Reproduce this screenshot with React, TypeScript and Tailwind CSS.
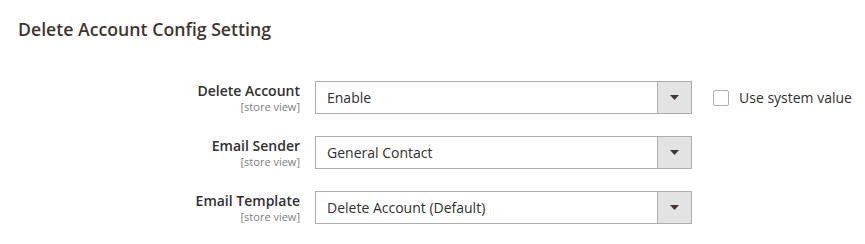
import React from 'react';

const rows = [
  { label: 'Delete Account', value: 'Enable', system: true },
  { label: 'Email Sender', value: 'General Contact', system: false },
  { label: 'Email Template', value: 'Delete Account (Default)', system: false },
];

const font = { fontFamily: '"Open Sans", "Noto Sans", sans-serif' };

export default function App() {
  return (
    <div className="w-[865px] h-[244px] bg-white text-[#303030]" style={font}>
      <h2 className="pl-[18px] pt-[17px] text-[17.7px] leading-[24px] font-semibold text-[#41362f]">
        Delete Account Config Setting
      </h2>
      <div className="mt-[40px] flex flex-col gap-[22px]">
        {rows.map((r) => (
          <div key={r.label} className="flex items-start">
            <div className="w-[300px] shrink-0 text-right">
              <div className="text-[14px] leading-[20px] font-semibold text-[#303030]">{r.label}</div>
              <div className="text-[11px] leading-[12px] text-[#808080]">[store view]</div>
            </div>
            <div className="ml-[15px] w-[377px] h-[33px] flex border border-[#adadad] bg-white">
              <div className="flex-1 pl-[11px] flex items-center text-[14px] text-[#303030]">{r.value}</div>
              <div className="w-[34px] border-l border-[#adadad] bg-[#e3e3e3] flex items-center justify-center">
                <svg width="9" height="5" viewBox="0 0 9 5">
                  <path d="M0 0h9L4.5 5z" fill="#41362f" />
                </svg>
              </div>
            </div>
            {r.system && (
              <label className="ml-[21px] h-[33px] flex items-center gap-[10px] text-[14px] text-[#303030]">
                <span className="w-[16px] h-[16px] rounded-[2px] border border-[#adadad] bg-white" />
                Use system value
              </label>
            )}
          </div>
        ))}
      </div>
    </div>
  );
}
